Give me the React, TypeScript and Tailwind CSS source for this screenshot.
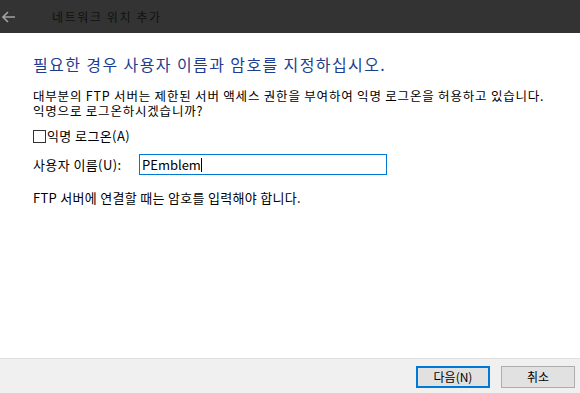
import React from 'react';

const font = { fontFamily: '"Noto Sans CJK KR", "Noto Sans", sans-serif' };

export default function App() {
  return (
    <div className="w-[580px] h-[393px] flex flex-col bg-white overflow-hidden text-[#000]" style={font}>
      {/* 제목 표시줄 */}
      <div className="h-[33px] bg-[#333333] flex items-center shrink-0">
        <svg width="14" height="12" viewBox="0 0 14 12" className="ml-[2px]">
          <path d="M6 1L1 6l5 5M1 6h12" fill="none" stroke="#a0a0a0" strokeWidth="1.6" />
        </svg>
        <span className="ml-[36px] text-[12px] tracking-[1.6px] text-[#111]">네트워크 위치 추가</span>
      </div>

      {/* 본문 */}
      <div className="flex-1 flex flex-col pl-[33px] pr-2">
        <h1 className="mt-[20px] text-[16px] leading-[22px] tracking-[1.4px] text-[#1e3d8f]">필요한 경우 사용자 이름과 암호를 지정하십시오.</h1>
        <div className="mt-[13px] text-[12.5px] leading-[15px] tracking-[0.8px]">
          <p>대부분의 FTP 서버는 제한된 서버 액세스 권한을 부여하여 익명 로그온을 허용하고 있습니다.</p>
          <p>익명으로 로그온하시겠습니까?</p>
        </div>
        <label className="mt-[11px] flex items-center gap-[1px] text-[13px] leading-[14px] tracking-[0.4px]">
          <span className="w-[13px] h-[13px] border border-[#333] bg-white inline-block" />
          익명 로그온(A)
        </label>
        <div className="mt-[11px] flex items-center">
          <span className="w-[106px] text-[13px] tracking-[0.4px]">사용자 이름(U):</span>
          <div className="w-[248px] h-[21px] border border-[#0078d7] flex items-center px-[2px] text-[13px]">
            PEmblem<span className="w-px h-[14px] bg-black" />
          </div>
        </div>
        <p className="mt-[16px] text-[13px] leading-[14px] tracking-[0.3px]">FTP 서버에 연결할 때는 암호를 입력해야 합니다.</p>
      </div>

      {/* 하단 버튼 */}
      <div className="h-[35px] bg-[#f0f0f0] border-t border-[#dfdfdf] flex items-start justify-end gap-[11px] pr-[5px] pt-[7px] shrink-0">
        <button className="w-[74px] h-[22px] bg-[#e1e1e1] border-2 border-[#0078d7] text-[12px] leading-none">다음(N)</button>
        <button className="w-[74px] h-[22px] bg-[#e1e1e1] border border-[#adadad] text-[12px] leading-none">취소</button>
      </div>
    </div>
  );
}
